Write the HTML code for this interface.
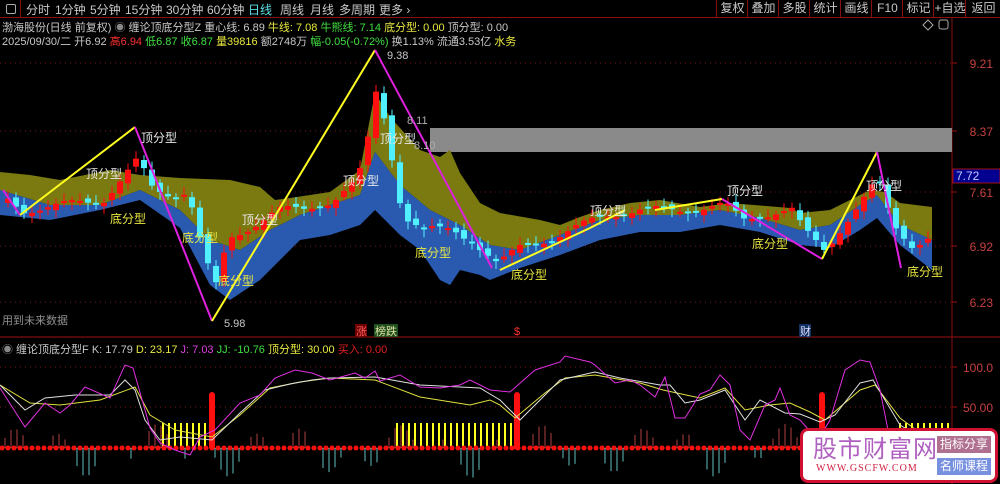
<!DOCTYPE html>
<html><head><meta charset="utf-8"><style>
html,body{margin:0;padding:0;background:#000;width:1000px;height:484px;overflow:hidden;font-family:"Liberation Sans","Noto Sans CJK SC",sans-serif;}
#topbar{position:absolute;left:0;top:0;width:1000px;height:17px;border-bottom:1px solid #8a1010;}
.tb{position:absolute;top:1px;font-size:12px;color:#c8c8c8;}
.rb{position:absolute;top:0;height:17px;border-left:1px solid #8a1010;font-size:12px;color:#c8c8c8;line-height:17px;text-align:center;}
.info{position:absolute;font-size:11px;white-space:nowrap;color:#c8c8c8;}
svg{position:absolute;left:0;top:0;}
</style></head><body>
<div id="topbar">
<div style="position:absolute;left:1px;top:0;width:19px;height:17px;border-right:1px solid #8a1010;"><div style="position:absolute;left:5px;top:4px;width:8px;height:8px;border:1px solid #aaa;border-radius:2px;"></div></div>
<span class="tb" style="left:26px">分时</span><span class="tb" style="left:55px">1分钟</span><span class="tb" style="left:90px">5分钟</span><span class="tb" style="left:125px">15分钟</span><span class="tb" style="left:166px">30分钟</span><span class="tb" style="left:207px">60分钟</span><span class="tb" style="left:248px;color:#5ee0e8">日线</span><span class="tb" style="left:280px">周线</span><span class="tb" style="left:310px">月线</span><span class="tb" style="left:339px">多周期</span><span class="tb" style="left:379px">更多 ›</span>
<div class="rb" style="left:716px;width:31px">复权</div><div class="rb" style="left:747px;width:31px">叠加</div><div class="rb" style="left:778px;width:31px">多股</div><div class="rb" style="left:809px;width:31px">统计</div><div class="rb" style="left:840px;width:31px">画线</div><div class="rb" style="left:871px;width:31px">F10</div><div class="rb" style="left:902px;width:31px">标记</div><div class="rb" style="left:933px;width:32px">+自选</div><div class="rb" style="left:965px;width:35px">返回</div>
</div>
<svg id="s" width="1000" height="484" xmlns="http://www.w3.org/2000/svg" font-family="Liberation Sans, Noto Sans CJK SC, sans-serif"></svg>
<div class="info" style="left:2px;top:19px">渤海股份(日线 前复权) <span style="color:#888">◉</span> 缠论顶底分型Z 重心线: 6.89 <span style="color:#e8e840">牛线: 7.08</span> <span style="color:#40e040">牛熊线: 7.14</span> <span style="color:#e8e840">底分型: 0.00</span> 顶分型: 0.00</div>
<div class="info" style="left:2px;top:33px">2025/09/30/二 开6.92 <span style="color:#ff3030">高6.94</span> <span style="color:#40e040">低6.87 收6.87</span> <span style="color:#e8e840">量39816</span> 额2748万 <span style="color:#40e040">幅-0.05(-0.72%)</span> 换1.13% 流通3.53亿 <span style="color:#e8e840">水务</span></div>
<div class="info" style="left:2px;top:341px"><span style="color:#888">◉</span> 缠论顶底分型F K: 17.79 <span style="color:#e8e840">D: 23.17</span> <span style="color:#e040e0">J: 7.03</span> <span style="color:#40e040">JJ: -10.76</span> <span style="color:#e8e840">顶分型: 30.00</span> <span style="color:#e02020">买入: 0.00</span></div>
<div style="position:absolute;left:800px;top:428px;width:192px;height:49px;background:#fff;border:3px solid #d01030;border-radius:8px;">
<div style="position:absolute;left:10px;top:1px;font-size:24px;color:#b060c0;letter-spacing:1px;font-family:'Noto Sans CJK SC',sans-serif;line-height:30px;">股市财富网</div>
<div style="position:absolute;left:13px;top:32px;font-size:10px;color:#d02040;font-family:'Liberation Serif',serif;letter-spacing:1px;">WWW.GSCFW.COM</div>
<div style="position:absolute;left:134px;top:5px;width:54px;height:17px;background:#b07090;color:#fff;font-size:12px;text-align:center;line-height:17px;">指标分享</div>
<div style="position:absolute;left:134px;top:27px;width:54px;height:17px;background:#7890e0;color:#fff;font-size:12px;text-align:center;line-height:17px;">名师课程</div>
</div>
<script>
(function(){
var s=document.getElementById('s'),h='';
function L(a){return a.map(function(p){return p[0]+','+p[1]}).join(' ');}
function interp(a,x){for(var i=0;i<a.length-1;i++){if(x>=a[i][0]&&x<=a[i+1][0]){var t=(x-a[i][0])/(a[i+1][0]-a[i][0]);return a[i][1]+t*(a[i+1][1]-a[i][1]);}}return a[a.length-1][1];}
h+='<line x1="952" y1="18" x2="952" y2="484" stroke="#8a1010"/>';
h+='<line x1="0" y1="337" x2="1000" y2="337" stroke="#a01010"/>';
h+='<path d="M928 20 l5 5 l-5 5 l-5 -5z" fill="none" stroke="#aaa"/><rect x="939" y="20" width="9" height="9" rx="2" fill="none" stroke="#aaa"/>';
[[63,'9.21'],[131,'8.37'],[192,'7.61'],[246,'6.92'],[302,'6.23'],[367,'100.0'],[407,'50.00']].forEach(function(g){h+='<line x1="0" y1="'+g[0]+'" x2="952" y2="'+g[0]+'" stroke="#701818" stroke-dasharray="1,4"/><line x1="952" y1="'+g[0]+'" x2="957" y2="'+g[0]+'" stroke="#a01010"/><text x="993" y="'+(g[0]+5)+'" fill="#c84040" font-size="12" text-anchor="end">'+g[1]+'</text>';});
h+='<rect x="953" y="169" width="47" height="14" fill="#000090" stroke="#a01010"/><text x="956" y="180" fill="#c8c8ff" font-size="12">7.72</text>';
h+='<rect x="430" y="128" width="522" height="24" fill="#8a8a8a"/>';
var tp=[[0,172],[30,175],[60,180],[110,170],[140,175],[180,178],[230,180],[260,187],[275,200],[290,198],[330,192],[360,170],[375,93],[390,117],[420,150],[440,157],[450,150],[460,173],[480,203],[500,213],[540,220],[560,225],[580,217],[600,210],[630,203],[660,200],[700,207],[730,203],[790,208],[800,213],[830,210],[850,200],[870,190],[885,192],[900,203],[932,207]];
var md=[[0,190],[50,205],[100,205],[140,190],[180,210],[210,240],[240,250],[270,230],[300,215],[330,205],[360,195],[375,152],[400,185],[430,210],[460,225],[490,245],[520,250],[560,235],[600,220],[640,215],[680,215],[720,210],[760,218],[800,230],[830,225],[860,205],[877,195],[900,225],[932,240]];
var bt=[[0,215],[50,220],[100,210],[140,200],[180,228],[210,285],[230,300],[260,280],[300,240],[330,235],[360,225],[375,210],[400,235],[420,250],[440,280],[450,285],[460,270],[480,275],[490,280],[520,268],[560,255],[600,240],[640,232],[680,232],[720,225],[760,232],[800,245],[830,248],[860,230],[877,218],[900,245],[932,270]];
h+='<polygon points="'+L(tp)+' '+L(md.slice().reverse())+'" fill="#7a7a10"/>';
h+='<polygon points="'+L(md)+' '+L(bt.slice().reverse())+'" fill="#2a5ab0"/>';
var path=[[5,200],[20,210],[60,205],[100,200],[135,160],[150,190],[170,195],[185,190],[200,250],[212,290],[225,240],[250,225],[275,210],[300,210],[330,200],[355,180],[365,140],[372,90],[382,120],[400,215],[420,230],[450,230],[470,240],[495,265],[520,245],[560,235],[600,215],[640,210],[680,210],[722,205],[740,220],[770,212],[790,210],[800,230],[822,250],[840,225],[860,200],[875,180],[890,225],[910,245],[932,234]];
var prev=interp(path,5);
for(var x=5;x<=932;x+=8){var c=interp(path,x)+Math.sin(x*0.7)*4;var o=prev+Math.cos(x*1.3)*3;var up=c<o;var t=Math.min(o,c),b=Math.max(o,c);if(b-t<2)b=t+2;var col=up?'#ff1010':'#50f0ff';
h+='<line x1="'+(x+3)+'" y1="'+(t-3-Math.abs(Math.sin(x))*5)+'" x2="'+(x+3)+'" y2="'+(b+3+Math.abs(Math.cos(x))*5)+'" stroke="'+col+'"/><rect x="'+x+'" y="'+t+'" width="6" height="'+(b-t)+'" fill="'+col+'"/>';prev=c;}
var seg=[[[3,190],[20,215],'#e020e0'],[[20,215],[135,127],'#ffff20'],[[135,127],[212,321],'#e020e0'],[[212,321],[375,50],'#ffff20'],[[375,50],[492,268],'#e020e0'],[[500,270],[590,228],'#ffff20'],[[590,228],[625,210],'#ffff20'],[[655,210],[722,199],'#ffff20'],[[722,199],[822,259],'#e020e0'],[[822,259],[877,152],'#ffff20'],[[877,152],[901,268],'#e020e0']];
seg.forEach(function(q){h+='<line x1="'+q[0][0]+'" y1="'+q[0][1]+'" x2="'+q[1][0]+'" y2="'+q[1][1]+'" stroke="'+q[2]+'" stroke-width="2"/>';});
var W='#e8e8e8',Y='#e8e840';
[[141,142,W,'顶分型'],[86,178,W,'顶分型'],[110,223,Y,'底分型'],[182,242,Y,'底分型'],[218,285,Y,'底分型'],[242,224,W,'顶分型'],[343,185,W,'顶分型'],[380,143,W,'顶分型'],[415,257,Y,'底分型'],[511,279,Y,'底分型'],[590,215,W,'顶分型'],[727,195,W,'顶分型'],[752,248,Y,'底分型'],[866,190,W,'顶分型'],[907,276,Y,'底分型']].forEach(function(l){h+='<text x="'+l[0]+'" y="'+l[1]+'" fill="'+l[2]+'" font-size="12">'+l[3]+'</text>';});
h+='<text x="387" y="59" fill="#c8c8c8" font-size="11">9.38</text><text x="224" y="327" fill="#c8c8c8" font-size="11">5.98</text><text x="407" y="124" fill="#b0b0b0" font-size="11">8.11</text><text x="414" y="149" fill="#b0b0b0" font-size="11">8.10</text>';
h+='<text x="2" y="324" fill="#909090" font-size="11">用到未来数据</text>';
h+='<rect x="355" y="324" width="12" height="13" fill="#700000"/><text x="356" y="335" fill="#ff6060" font-size="11">涨</text><rect x="374" y="324" width="24" height="13" fill="#205020"/><text x="375" y="335" fill="#e0e0a0" font-size="11">榜跌</text>';
h+='<text x="514" y="335" fill="#ff3030" font-size="11">$</text><rect x="799" y="324" width="12" height="13" fill="#103060"/><text x="800" y="335" fill="#e0e0ff" font-size="11">财</text>';
for(var x2=5;x2<950;x2+=6){var a=Math.sin(x2*0.05)*0.5+Math.sin(x2*0.13)*0.5;var hg=Math.abs(a)*30;
if(a>0.3)h+='<line x1="'+x2+'" y1="448" x2="'+x2+'" y2="'+(448-hg*0.8)+'" stroke="#b04040"/>';
else if(a<-0.3)h+='<line x1="'+x2+'" y1="448" x2="'+x2+'" y2="'+(448+hg)+'" stroke="#60c0c0"/>';}
[[163,207],[397,512],[900,950]].forEach(function(r){for(var x3=r[0];x3<=r[1];x3+=6)h+='<line x1="'+x3+'" y1="423" x2="'+x3+'" y2="448" stroke="#ffff20" stroke-width="2"/>';});
for(var x4=2;x4<952;x4+=6)h+='<circle cx="'+x4+'" cy="448" r="2.5" fill="#ff1010"/>';
[212,517,822].forEach(function(x5){h+='<rect x="'+(x5-3)+'" y="392" width="6" height="58" rx="3" fill="#ff1010"/>';});
var J=[[0,388],[25,427],[45,403],[60,413],[70,405],[85,387],[110,398],[125,365],[133,368],[145,410],[150,428],[160,443],[175,450],[190,455],[200,437],[215,430],[240,403],[260,395],[275,378],[295,370],[312,373],[330,380],[355,373],[365,378],[375,371],[380,381],[400,375],[420,387],[440,388],[460,385],[470,380],[490,390],[510,392],[535,370],[560,362],[565,356],[590,362],[595,365],[615,383],[630,380],[640,385],[655,397],[665,377],[675,418],[685,418],[700,394],[710,390],[720,375],[730,385],[740,430],[750,440],[765,405],[775,400],[780,388],[790,415],[800,420],[818,440],[830,420],[845,370],[860,360],[870,362],[880,390],[890,440],[910,465],[925,462],[945,450]];
var K=[[0,385],[25,410],[45,398],[75,395],[110,395],[125,380],[135,390],[145,420],[160,440],[180,437],[212,440],[240,413],[265,390],[290,384],[312,380],[330,378],[375,377],[420,385],[480,388],[500,400],[520,420],[560,380],[595,372],[620,378],[660,385],[670,385],[685,403],[700,400],[725,390],[745,420],[760,400],[785,413],[800,414],[820,422],[835,415],[860,383],[873,380],[885,400],[900,425],[925,440],[950,445]];
var D=[[0,385],[30,403],[60,405],[100,400],[135,387],[150,415],[175,430],[212,437],[240,415],[270,388],[300,382],[330,378],[375,380],[420,397],[470,405],[490,400],[500,405],[515,418],[545,393],[565,378],[595,375],[640,383],[663,390],[700,398],[725,388],[745,410],[770,405],[790,403],[810,412],[825,420],[860,390],[875,385],[900,418],[930,440],[950,445]];
h+='<polyline points="'+L(D)+'" fill="none" stroke="#e0e040"/><polyline points="'+L(K)+'" fill="none" stroke="#e0e0e0"/><polyline points="'+L(J)+'" fill="none" stroke="#e030e0"/>';
s.innerHTML=h;
})();
</script>
</body></html>
